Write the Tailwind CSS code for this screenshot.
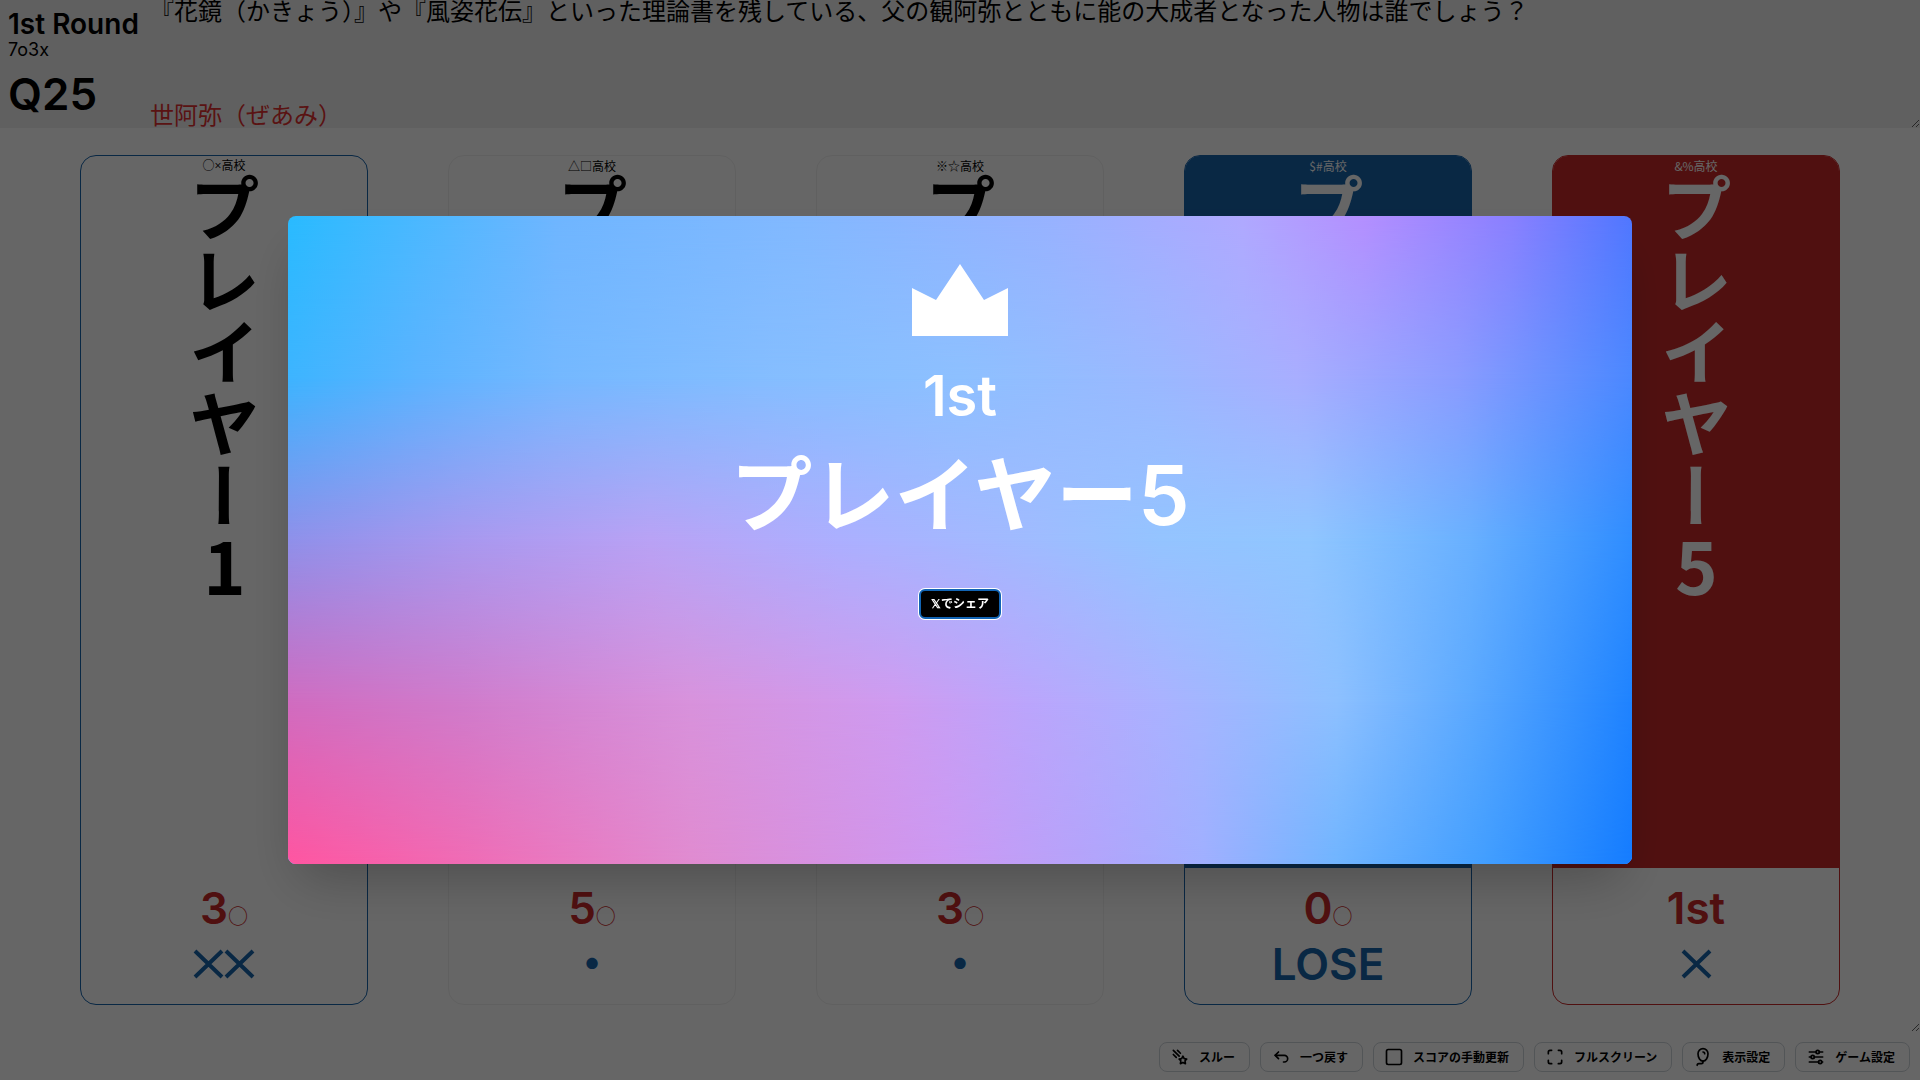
<!DOCTYPE html>
<html lang="ja">
<head>
    <meta charset="UTF-8">
    <meta name="viewport" content="width=device-width, initial-scale=1.0">
    <title>1st Round - 得点表示</title>
    <!-- Tailwind CSS via CDN -->
    <script src="https://cdn.jsdelivr.net/npm/@tailwindcss/browser@4"></script>
</head>
<body class="h-screen flex flex-col overflow-hidden bg-white text-black font-['Inter','Noto_Sans_CJK_JP',sans-serif]">
    <!-- Question header -->
    <header class="h-32 shrink-0 flex resize-y overflow-hidden bg-[#f1f1f1]">
        <div class="w-[150px] shrink-0 pl-2 pt-2.5">
            <h1 class="text-[28px] leading-7 font-semibold whitespace-nowrap">1st Round</h1>
            <p class="text-lg leading-6">7o3x</p>
            <p class="mt-1 text-[44px] leading-14 font-semibold">Q25</p>
        </div>
        <div class="flex-1 flex flex-col justify-between text-2xl leading-6">
            <p>『花鏡（かきょう）』や『風姿花伝』といった理論書を残している、父の観阿弥とともに能の大成者となった人物は誰でしょう？</p>
            <p class="text-[#e03131]">世阿弥（ぜあみ）</p>
        </div>
    </header>

    <!-- Player cards -->
    <main class="flex-1 min-h-0 resize-y overflow-hidden grid grid-cols-5 gap-20 px-20 py-[27px]">
        <section class="flex flex-col rounded-2xl border border-[#1864ab] overflow-hidden">
            <div class="flex-1 min-h-0 flex flex-col items-center pt-1">
                <p class="text-xs leading-3 font-['Open_Sans','Noto_Sans_CJK_JP',sans-serif]">○×高校</p>
                <h2 class="text-7xl leading-none font-bold font-['Noto_Sans_CJK_JP',sans-serif] [writing-mode:vertical-rl] [text-orientation:upright]">プレイヤー1</h2>
            </div>
            <div class="py-3 text-center text-[44px] leading-14 font-semibold">
                <p class="text-[#c92a2a]">3<span class="text-xl leading-none font-normal font-['Noto_Sans_CJK_JP',sans-serif]">○</span></p>
                <p class="h-14 flex items-center justify-center text-[#1864ab]">
                    <svg class="w-[62px] h-[30px]" viewBox="0 0 62 30" fill="none" stroke="currentColor" stroke-width="4" role="img" aria-label="2×"><path d="M2 2L29 28M29 2L2 28M33 2L60 28M60 2L33 28"/></svg>
                </p>
            </div>
        </section>

        <section class="flex flex-col rounded-2xl border border-[#f1f1f1] overflow-hidden">
            <div class="flex-1 min-h-0 flex flex-col items-center pt-1">
                <p class="text-xs leading-3 font-['Noto_Sans_CJK_JP',sans-serif]">△□高校</p>
                <h2 class="text-7xl leading-none font-bold font-['Noto_Sans_CJK_JP',sans-serif] [writing-mode:vertical-rl] [text-orientation:upright]">プレイヤー2</h2>
            </div>
            <div class="py-3 text-center text-[44px] leading-14 font-semibold">
                <p class="text-[#c92a2a]">5<span class="text-xl leading-none font-normal font-['Noto_Sans_CJK_JP',sans-serif]">○</span></p>
                <p class="text-[#1864ab]">・</p>
            </div>
        </section>

        <section class="flex flex-col rounded-2xl border border-[#f1f1f1] overflow-hidden">
            <div class="flex-1 min-h-0 flex flex-col items-center pt-1">
                <p class="text-xs leading-3 font-['Noto_Sans_CJK_JP',sans-serif]">※☆高校</p>
                <h2 class="text-7xl leading-none font-bold font-['Noto_Sans_CJK_JP',sans-serif] [writing-mode:vertical-rl] [text-orientation:upright]">プレイヤー3</h2>
            </div>
            <div class="py-3 text-center text-[44px] leading-14 font-semibold">
                <p class="text-[#c92a2a]">3<span class="text-xl leading-none font-normal font-['Noto_Sans_CJK_JP',sans-serif]">○</span></p>
                <p class="text-[#1864ab]">・</p>
            </div>
        </section>

        <section class="flex flex-col rounded-2xl border border-[#1864ab] overflow-hidden">
            <div class="flex-1 min-h-0 flex flex-col items-center pt-1 bg-[#1864ab] text-white">
                <p class="text-xs leading-3 font-['Noto_Sans_CJK_JP',sans-serif]">$#高校</p>
                <h2 class="text-7xl leading-none font-bold font-['Noto_Sans_CJK_JP',sans-serif] [writing-mode:vertical-rl] [text-orientation:upright]">プレイヤー4</h2>
            </div>
            <div class="py-3 text-center text-[44px] leading-14 font-semibold">
                <p class="text-[#c92a2a]">0<span class="text-xl leading-none font-normal font-['Noto_Sans_CJK_JP',sans-serif]">○</span></p>
                <p class="text-[#1864ab]">LOSE</p>
            </div>
        </section>

        <section class="flex flex-col rounded-2xl border border-[#c92a2a] overflow-hidden">
            <div class="flex-1 min-h-0 flex flex-col items-center pt-1 bg-[#c92a2a] text-white">
                <p class="text-xs leading-3 font-['Noto_Sans_CJK_JP',sans-serif]">&amp;%高校</p>
                <h2 class="text-7xl leading-none font-bold font-['Noto_Sans_CJK_JP',sans-serif] [writing-mode:vertical-rl] [text-orientation:upright]">プレイヤー5</h2>
            </div>
            <div class="py-3 text-center text-[44px] leading-14 font-semibold">
                <p class="text-[#c92a2a]">1st</p>
                <p class="h-14 flex items-center justify-center text-[#1864ab]">
                    <svg class="w-[31px] h-[30px]" viewBox="0 0 31 30" fill="none" stroke="currentColor" stroke-width="4" role="img" aria-label="1×"><path d="M2 2L29 28M29 2L2 28"/></svg>
                </p>
            </div>
        </section>
    </main>

    <!-- Controls -->
    <footer class="shrink-0 flex justify-end gap-2.5 px-2.5 pt-2.5 pb-2 text-xs font-bold font-['Noto_Sans_CJK_JP',sans-serif]">
        <button type="button" class="h-[30px] flex items-center gap-[9px] pl-2.5 pr-3.5 rounded-lg border border-[#ced4da] bg-white">
            <svg class="size-5" viewBox="0 0 24 24" fill="none" stroke="currentColor" stroke-width="2" stroke-linecap="round" stroke-linejoin="round"><path d="M15.5 18.5l-3 1.5l.5 -3.5l-2 -2l3 -.5l1.5 -3l1.5 3l3 .5l-2 2l.5 3.5z"/><path d="M4 4l7 7"/><path d="M9 4l3.500 3.500"/><path d="M4 9l3.500 3.500"/></svg>
            スルー
        </button>
        <button type="button" class="h-[30px] flex items-center gap-[9px] pl-2.5 pr-3.5 rounded-lg border border-[#ced4da] bg-white">
            <svg class="size-5" viewBox="0 0 24 24" fill="none" stroke="currentColor" stroke-width="2" stroke-linecap="round" stroke-linejoin="round"><path d="M9 14l-4 -4l4 -4"/><path d="M5 10h11a4 4 0 1 1 0 8h-1"/></svg>
            一つ戻す
        </button>
        <button type="button" class="h-[30px] flex items-center gap-[9px] pl-2.5 pr-3.5 rounded-lg border border-[#ced4da] bg-white">
            <svg class="size-5" viewBox="0 0 24 24" fill="none" stroke="currentColor" stroke-width="2" stroke-linecap="round" stroke-linejoin="round"><rect x="3" y="3" width="18" height="18" rx="2"/></svg>
            スコアの手動更新
        </button>
        <button type="button" class="h-[30px] flex items-center gap-[9px] pl-2.5 pr-3.5 rounded-lg border border-[#ced4da] bg-white">
            <svg class="size-5" viewBox="0 0 24 24" fill="none" stroke="currentColor" stroke-width="2" stroke-linecap="round" stroke-linejoin="round"><path d="M4 8v-2a2 2 0 0 1 2 -2h2"/><path d="M4 16v2a2 2 0 0 0 2 2h2"/><path d="M16 4h2a2 2 0 0 1 2 2v2"/><path d="M16 20h2a2 2 0 0 0 2 -2v-2"/></svg>
            フルスクリーン
        </button>
        <button type="button" class="h-[30px] flex items-center gap-[9px] pl-2.5 pr-3.5 rounded-lg border border-[#ced4da] bg-white">
            <svg class="size-5" viewBox="0 0 24 24" fill="none" stroke="currentColor" stroke-width="2" stroke-linecap="round" stroke-linejoin="round"><path d="M14 8a2 2 0 0 0 -2 -2"/><path d="M6 8a6 6 0 1 1 12 0c0 4.970 -2.686 9 -6 9s-6 -4.030 -6 -9"/><path d="M12 17v1a2 2 0 0 1 -2 2h-3a2 2 0 0 0 -2 2"/></svg>
            表示設定
        </button>
        <button type="button" class="h-[30px] flex items-center gap-[9px] pl-2.5 pr-3.5 rounded-lg border border-[#ced4da] bg-white">
            <svg class="size-5" viewBox="0 0 24 24" fill="none" stroke="currentColor" stroke-width="2" stroke-linecap="round" stroke-linejoin="round"><circle cx="14" cy="6" r="2"/><path d="M4 6h8"/><path d="M16 6h4"/><circle cx="8" cy="12" r="2"/><path d="M4 12h2"/><path d="M10 12h10"/><circle cx="17" cy="18" r="2"/><path d="M4 18h11"/><path d="M19 18h1"/></svg>
            ゲーム設定
        </button>
    </footer>

    <!-- Winner dialog -->
    <div class="fixed inset-0 flex items-center justify-center bg-black/60">
        <div role="dialog" aria-modal="true" aria-labelledby="winner-name" class="relative w-[70%] h-[60%] overflow-hidden rounded-lg shadow-2xl text-white font-semibold">
            <!-- Mesh gradient: one horizontal band per layer, faded into the next -->
            <div class="absolute inset-0 bg-[linear-gradient(90deg,#29bbff,#6fb6ff_20%,#82b9ff_38%,#98b2ff_57%,#b0a9ff_71%,#b48fff_80%,#8a80ff_91%,#5077ff)]"></div>
            <div class="absolute inset-0 bg-[linear-gradient(90deg,#3db4ff,#5cb3ff_10%,#74b8ff_20%,#84bdff_35%,#8dc0ff_50%,#9bb8ff_65%,#a8aeff_75%,#8a9cff_87%,#4b88ff)] mask-[linear-gradient(180deg,transparent,black_25%)]"></div>
            <div class="absolute inset-0 bg-[linear-gradient(90deg,#8f90ea,#a898ef_13%,#b9a2f5_27%,#acafff_41%,#a0bbff_55%,#94c4ff_65%,#90c6ff_76%,#68b0ff_88%,#2f8dff)] mask-[linear-gradient(180deg,transparent_25%,black_50%)]"></div>
            <div class="absolute inset-0 bg-[linear-gradient(90deg,#d06cc0,#d07bcb_13%,#d892dc_30%,#cf9bf0_45%,#bba5fc_55%,#aab2ff_65%,#8dc0ff_78%,#5ba9ff_88%,#1f83ff)] mask-[linear-gradient(180deg,transparent_50%,black_75%)]"></div>
            <div class="absolute inset-0 bg-[linear-gradient(90deg,#ff55a0,#f06bb4_13%,#e08bd0_30%,#cc98f2_49%,#b2a4fb_60%,#a0afff_68%,#70b4ff_78%,#429eff_89%,#157cff)] mask-[linear-gradient(180deg,transparent_75%,black)]"></div>

            <div class="relative flex flex-col items-center pt-12">
                <svg class="w-24 h-18" viewBox="0 0 96 72" fill="currentColor"><path d="M0 24L24 36L48 0L72 36L96 24V72H0Z"/></svg>
                <p class="mt-8 text-[56px] leading-14">1st</p>
                <h2 id="winner-name" class="mt-6 text-[82px] leading-24">プレイヤー5</h2>
                <button type="button" class="mt-[45px] h-[30px] px-2.5 rounded-md border-2 border-[#1264b3] ring-1 ring-white bg-black text-xs font-bold">𝕏でシェア</button>
            </div>
        </div>
    </div>
</body>
</html>
